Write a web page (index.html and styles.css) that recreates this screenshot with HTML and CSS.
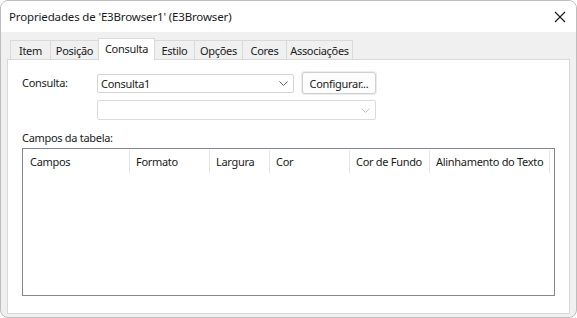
FILE: index.html
```html
<!DOCTYPE html>
<html lang="pt-BR">
<head>
    <meta charset="UTF-8">
    <title>Propriedades de 'E3Browser1' (E3Browser)</title>
    <link rel="stylesheet" href="styles.css">
</head>
<body>
    <div class="window">
        <div class="titlebar">
            <span class="title">Propriedades de 'E3Browser1' (E3Browser)</span>
            <svg class="close" width="12" height="12" viewBox="0 0 12 12">
                <path d="M1 1 L11 11 M11 1 L1 11" stroke="#1a1a1a" stroke-width="1.1" fill="none"/>
            </svg>
        </div>

        <div class="client">
            <div class="tabs">
                <div class="tab w40">Item</div>
                <div class="tab w48">Posição</div>
                <div class="tab active">Consulta</div>
                <div class="tab w40">Estilo</div>
                <div class="tab w48">Opções</div>
                <div class="tab w44">Cores</div>
                <div class="tab w66">Associações</div>
            </div>

            <div class="panel">
                <div class="form">
                    <label class="label">Consulta:</label>
                    <div class="combo">
                        <span>Consulta1</span>
                        <svg width="9" height="5" viewBox="0 0 9 5"><path d="M0.5 0.5 L4.5 4.5 L8.5 0.5" stroke="#606060" fill="none"/></svg>
                    </div>
                    <button class="btn">Configurar...</button>
                    <div class="combo disabled">
                        <span></span>
                        <svg width="9" height="5" viewBox="0 0 9 5"><path d="M0.5 0.5 L4.5 4.5 L8.5 0.5" stroke="#c4c4c4" fill="none"/></svg>
                    </div>
                </div>

                <div class="section-label">Campos da tabela:</div>

                <div class="listview">
                    <div class="header">
                        <div class="col c106">Campos</div>
                        <div class="col c80">Formato</div>
                        <div class="col c60">Largura</div>
                        <div class="col c80">Cor</div>
                        <div class="col c80">Cor de Fundo</div>
                        <div class="col c120">Alinhamento do Texto</div>
                    </div>
                </div>
            </div>
        </div>
    </div>
</body>
</html>
```

FILE: styles.css
```css
* {
    box-sizing: border-box;
}
body {
    margin: 0;
    font-family: 'Noto Sans', 'Open Sans', sans-serif;
    font-size: 11px;
    letter-spacing: -0.3px;
    color: #1a1a1a;
    background-color: #ffffff;
}
.window {
    width: 577px;
    height: 318px;
    border: 1px solid #bdbdbd;
    border-radius: 8px;
    background-color: #f0f0f0;
    overflow: hidden;
}
.titlebar {
    height: 31px;
    background-color: #ffffff;
    display: flex;
    align-items: center;
    justify-content: space-between;
    padding: 0 10px 0 8px;
    font-size: 11.5px;
    letter-spacing: -0.15px;
}
.title {
    margin-top: -1px;
}
.tabs {
    display: flex;
    align-items: flex-end;
    height: 21px;
    padding-left: 3px;
    position: relative;
    z-index: 1;
}
.client {
    padding: 6px 6px 0 6px;
}
.tab {
    height: 19px;
    border: 1px solid #d9d9d9;
    border-bottom: none;
    margin-left: -1px;
    display: flex;
    align-items: center;
    justify-content: center;
    padding-top: 1px;
    background-color: #f0f0f0;
}
.tab:first-child {
    margin-left: 0;
}
.tab.active {
    width: 57px;
    height: 22px;
    margin-bottom: -1px;
    background-color: #ffffff;
    padding-top: 0;
    padding-bottom: 3px;
}
.w40 { width: 41px; }
.w44 { width: 45px; }
.w48 { width: 49px; }
.w66 { width: 67px; }
.panel {
    height: 255px;
    border: 1px solid #d9d9d9;
    background-color: #ffffff;
    padding: 12px 14px 0 14px;
}
.form {
    display: grid;
    grid-template-columns: 67px 197px 74px;
    column-gap: 8px;
    row-gap: 6px;
    align-items: center;
}
.label {
    align-self: start;
    padding-top: 3px;
}
.combo {
    height: 19px;
    border: 1px solid #d4d4d4;
    border-radius: 2px;
    background-color: #ffffff;
    display: flex;
    align-items: center;
    justify-content: space-between;
    padding: 0 5px 0 3px;
}
.combo.disabled {
    grid-column: 2 / 4;
    height: 20px;
    border-color: #dcdcdc;
}
.btn {
    height: 22px;
    font-family: inherit;
    font-size: 11px;
    letter-spacing: inherit;
    color: #1a1a1a;
    border: 1px solid #d0d0d0;
    border-radius: 3px;
    background-color: #fdfdfd;
    box-shadow: 0 0 0 1px #ececec;
    padding: 0;
}
.section-label {
    margin-top: 10px;
    height: 18px;
}
.listview {
    width: 533px;
    height: 148px;
    border: 1px solid #828790;
    background-color: #ffffff;
}
.header {
    display: flex;
    height: 24px;
}
.col {
    border-right: 1px solid #e5e5e5;
    padding-left: 6px;
    display: flex;
    align-items: center;
    margin-top: 1px;
    white-space: nowrap;
    overflow: hidden;
}
.c106 { width: 107px; padding-left: 7px; }
.c80 { width: 80px; }
.c60 { width: 60px; }
.c120 { width: 120px; }
```
